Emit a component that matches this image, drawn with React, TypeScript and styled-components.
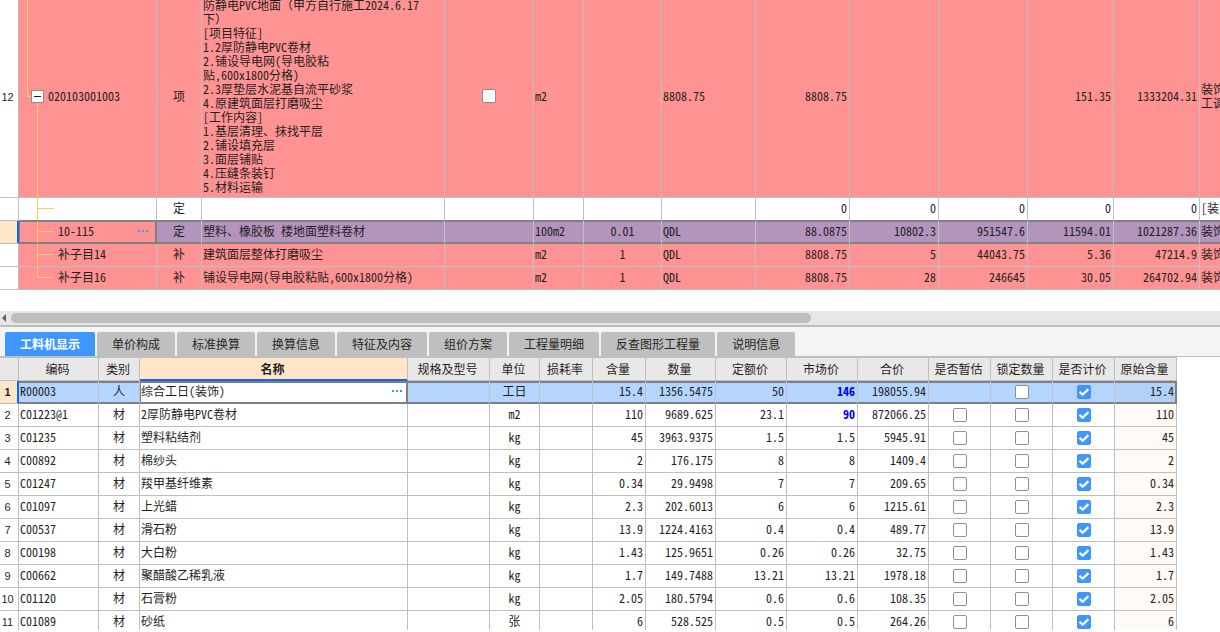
import React from 'react';
import styled, { createGlobalStyle, css } from 'styled-components';

const color = {
  line: '#bfbfbf',
  frame: '#808080',
  pink: '#ff9292',
  purple: '#b294bd',
  select: '#b4d5ff',
  peach: '#ffe6c8',
  head: '#e8e8e8',
  accent: '#0a66ff',
  blue: '#4096ff',
  tree: '#ffc773',
  text: '#1f1f1f',
};

const GlobalStyle = createGlobalStyle`
  * { box-sizing: border-box; }
  body {
    margin: 0;
    background: #fff;
    color: ${color.text};
    font-family: "Noto Sans CJK SC", "Liberation Sans", sans-serif;
    font-size: 12px;
    line-height: 14px;
    font-feature-settings: "hwid";
  }
  button, input { font: inherit; margin: 0; }
`;

const Page = styled.main`
  display: flex;
  flex-direction: column;
  height: 100vh;
  overflow: hidden;
`;

const BudgetPane = styled.section`
  flex: none;
  overflow: hidden;
  padding-bottom: 21px;
`;

const Table = styled.table`
  table-layout: fixed;
  border-collapse: separate;
  border-spacing: 0;
`;

const BudgetTable = styled(Table)`
  width: 100%;
  min-width: 1260px;
  margin-top: -4px;
`;

const ResourceTable = styled(Table)`
  width: 1177px;
  border-top: 1px solid ${color.line};
`;

const Row = styled.tr<{ $tall?: boolean }>`
  height: ${p => (p.$tall ? 202 : 23)}px;
`;

type Align = 'left' | 'center' | 'right';

const Cell = styled.td<{
  $align?: Align;
  $bg?: string;
  $selected?: boolean;
  $beforeSelected?: boolean;
  $inset?: number;
  $framed?: boolean;
  $edge?: boolean;
  $flush?: boolean;
  $strong?: boolean;
}>`
  padding: ${p => (p.$flush ? 0 : '0 2px 2px')};
  text-align: ${p => p.$align ?? 'left'};
  vertical-align: middle;
  white-space: pre;
  overflow: hidden;
  background: ${p => p.$bg ?? '#fff'};
  border-right: 1px solid ${color.line};
  border-bottom: 1px solid ${color.line};
  ${p => (p.$align ?? 'left') === 'left' && !p.$flush && css`padding-left: 1px;`}
  ${p => p.$strong && css`color: #0000f0; font-weight: 700;`}
  ${p => p.$beforeSelected && css`border-bottom-color: ${color.frame};`}
  ${p =>
    p.$selected &&
    css`
      border-bottom-color: ${color.frame};
      box-shadow: inset 0 ${p.$inset ?? 1}px ${color.frame}, inset 0 -1px ${color.frame}
        ${p.$framed ? `, inset 1px 0 ${color.frame}, inset -1px 0 ${color.frame}` : ''}
        ${p.$edge ? `, inset -1px 0 ${color.frame}` : ''};
      ${(p.$framed || p.$edge) && css`border-right-color: ${color.frame};`}
    `}
`;

const FullWidth = styled.span`
  font-feature-settings: normal;
`;

const RowHead = styled.th<{ $current?: boolean }>`
  padding: 0 3px 0 0;
  overflow: hidden;
  white-space: nowrap;
  font-family: "Liberation Sans", sans-serif;
  font-size: 11px;
  font-weight: ${p => (p.$current ? 700 : 400)};
  text-align: center;
  vertical-align: middle;
  background: ${p => (p.$current ? color.peach : '#fff')};
  border-right: 1px solid ${p => (p.$current ? color.accent : color.line)};
  border-bottom: 1px solid ${color.line};
  ${p => p.$current && css`box-shadow: inset -1px 0 ${color.accent};`}
`;

const ColHead = styled.th<{ $current?: boolean }>`
  padding: 0 2px 0 0;
  font-weight: ${p => (p.$current ? 700 : 400)};
  text-align: center;
  white-space: nowrap;
  background: ${p => (p.$current ? color.peach : color.head)};
  border-right: 1px solid ${color.line};
  border-bottom: 1px solid ${p => (p.$current ? color.accent : color.line)};
  ${p => p.$current && css`box-shadow: inset 0 -1px ${color.accent};`}
`;

const Split = styled.div`
  display: flex;
  align-items: center;
  flex: 1;
  justify-content: space-between;
`;

const TreeCell = styled.div`
  display: flex;
  align-items: center;

  > ${Split} { padding-bottom: 2px; }
`;

const TreeStack = styled.div`
  display: grid;
  align-items: center;
  flex: none;
  margin-right: 4px;

  > * { grid-area: 1 / 1; }
`;

const TreeLines = styled.svg`
  display: block;
  stroke: ${color.tree};
  fill: none;
  shape-rendering: crispEdges;
`;

const ToggleButton = styled.button`
  display: grid;
  place-items: center;
  justify-self: end;
  width: 13px;
  height: 13px;
  padding: 0;
  border: 1px solid #8c8c8c;
  background: #fff;

  &::before {
    content: '';
    width: 7px;
    height: 1px;
    background: ${color.text};
  }
`;

const MoreButton = styled.button<{ $wide?: boolean }>`
  display: flex;
  gap: 2px;
  padding: 4px ${p => (p.$wide ? 8 : 3)}px 4px 0;
  border: 0;
  background: none;
`;

const Dot = styled.i`
  width: 2px;
  height: 2px;
  background: #4398dc;
`;

const CheckWrap = styled.span`
  display: inline-grid;
  vertical-align: middle;

  > * { grid-area: 1 / 1; }
`;

const CheckInput = styled.input`
  appearance: none;
  width: 14px;
  height: 14px;
  border: 1px solid #8f8f8f;
  border-radius: 2px;
  background: #fff;

  &:checked {
    border-color: ${color.blue};
    background: ${color.blue};
  }
`;

const Tick = styled.svg`
  pointer-events: none;
`;

const ScrollTrack = styled.div`
  flex: none;
  display: grid;
  grid-template-columns: 11px 800fr 409fr;
  align-items: center;
  height: 14px;
  background: #e7e7e7;
`;

const ScrollArrow = styled.button`
  display: flex;
  padding: 0 0 0 2px;
  border: 0;
  background: none;
`;

const ScrollThumb = styled.div`
  height: 10px;
  border-radius: 5px;
  background: #bebebe;
`;

const TabBar = styled.nav`
  flex: none;
  display: flex;
  gap: 2px;
  padding: 5px 5px 0;
  height: 32px;
  background: #f4f4f4;
  border-top: 2px solid ${color.line};
  border-bottom: 1px solid ${color.line};
`;

const Tab = styled.button<{ $active?: boolean }>`
  flex: none;
  height: 24px;
  padding: 0 15px;
  border: 0;
  border-radius: 2px 2px 0 0;
  white-space: nowrap;
  color: ${p => (p.$active ? '#fff' : '#262626')};
  font-weight: ${p => (p.$active ? 700 : 400)};
  background: ${p => (p.$active ? color.blue : color.line)};
`;

const ResourcePane = styled.section`
  flex: 1;
  min-height: 0;
  overflow: hidden;
  border-bottom: 2px solid #fff;
`;

function More({ wide }: { wide?: boolean }) {
  return (
    <MoreButton $wide={wide} type="button" aria-label="更多">
      <Dot /><Dot /><Dot />
    </MoreButton>
  );
}

function Check({ label, checked = false }: { label: string; checked?: boolean }) {
  return (
    <CheckWrap>
      <CheckInput type="checkbox" aria-label={label} defaultChecked={checked} />
      {checked && (
        <Tick width="14" height="14" viewBox="0 0 14 14" fill="none" stroke="#fff" strokeWidth="2.2">
          <path d="M2.6 6.8 L5.6 9.8 L11.4 4.1" />
        </Tick>
      )}
    </CheckWrap>
  );
}

function Branch({ last }: { last?: boolean }) {
  return (
    <TreeLines width="35" height="22" viewBox="0 0 35 22">
      <path d={last ? 'M18.5 0 V10.5 H35' : 'M18.5 0 V22 M18.5 10.5 H35'} />
    </TreeLines>
  );
}

/* Full-width brackets keep a whole em while the Latin text is half-width. */
function WideText({ text }: { text: string }) {
  return (
    <>
      {text.split(/([（）])/).map((part, i) =>
        i % 2 ? <FullWidth key={i}>{part}</FullWidth> : part
      )}
    </>
  );
}

const rootName = [
  '防静电PVC地面（甲方自行施工2024.6.17',
  '下）',
  '[项目特征]',
  '1.2厚防静电PVC卷材',
  '2.铺设导电网(导电胶粘',
  '贴,600x1800分格)',
  '2.3厚垫层水泥基自流平砂浆',
  '4.原建筑面层打磨吸尘',
  '[工作内容]',
  '1.基层清理、抹找平层',
  '2.铺设填充层',
  '3.面层铺贴',
  '4.压缝条装钉',
  '5.材料运输',
].join('\n');

const budgetWidths = [19, 138, 45, 243, 89, 50, 78, 94, 94, 89, 89, 86, 86];

interface BudgetRow {
  no?: string;
  code: string;
  kind: string;
  name: string;
  unit: string;
  factor: string;
  expr: string;
  nums: string[];
  group: string;
  bg: string;
  root?: boolean;
  selected?: boolean;
}

const budgetRows: BudgetRow[] = [
  { no: '12', code: '020103001003', kind: '项', name: rootName, unit: 'm2', factor: '', expr: '8808.75', nums: ['8808.75', '', '', '151.35', '1333204.31'], group: '装饰\n工调', bg: color.pink, root: true },
  { code: '', kind: '定', name: '', unit: '', factor: '', expr: '', nums: ['0', '0', '0', '0', '0'], group: '[装', bg: '#fff' },
  { code: '10-115', kind: '定', name: '塑料、橡胶板 楼地面塑料卷材', unit: '100m2', factor: '0.01', expr: 'QDL', nums: ['88.0875', '10802.3', '951547.6', '11594.01', '1021287.36'], group: '装饰', bg: color.purple, selected: true },
  { code: '补子目14', kind: '补', name: '建筑面层整体打磨吸尘', unit: 'm2', factor: '1', expr: 'QDL', nums: ['8808.75', '5', '44043.75', '5.36', '47214.9'], group: '装饰', bg: color.pink },
  { code: '补子目16', kind: '补', name: '铺设导电网(导电胶粘贴,600x1800分格)', unit: 'm2', factor: '1', expr: 'QDL', nums: ['8808.75', '28', '246645', '30.05', '264702.94'], group: '装饰', bg: color.pink },
];

function BudgetLine({ row, index }: { row: BudgetRow; index: number }) {
  const common = {
    $bg: row.bg,
    $selected: row.selected,
    $beforeSelected: budgetRows[index + 1]?.selected,
  };
  return (
    <Row $tall={row.root}>
      <RowHead scope="row" $current={row.selected}>{row.no}</RowHead>
      <Cell {...common} $bg={row.selected ? color.pink : row.bg} $framed={row.selected} $flush>
        <TreeCell>
          {row.root ? (
            <TreeStack>
              <TreeLines width="25" height="201" viewBox="0 0 25 201">
                <path d="M8.5 0 V100.5 H12 M18.5 106 V201" />
              </TreeLines>
              <ToggleButton type="button" aria-label="折叠" />
            </TreeStack>
          ) : (
            <TreeStack>
              <Branch last={index === budgetRows.length - 1} />
            </TreeStack>
          )}
          <Split>
            {row.code}
            {row.selected && <More wide />}
          </Split>
        </TreeCell>
      </Cell>
      <Cell {...common} $align="center">{row.kind}</Cell>
      <Cell {...common}><WideText text={row.name} /></Cell>
      <Cell {...common} $align="center">{row.root && <Check label="锁定综合单价" />}</Cell>
      <Cell {...common}>{row.unit}</Cell>
      <Cell {...common} $align="center">{row.factor}</Cell>
      <Cell {...common}>{row.expr}</Cell>
      {row.nums.map((n, i) => (
        <Cell key={i} {...common} $align="right">{n}</Cell>
      ))}
      <Cell {...common}>{row.group}</Cell>
    </Row>
  );
}

const tabs = ['工料机显示', '单价构成', '标准换算', '换算信息', '特征及内容', '组价方案', '工程量明细', '反查图形工程量', '说明信息'];

const resourceWidths = [19, 80, 41, 268, 82, 50, 53, 53, 70, 71, 71, 71, 62, 62, 62, 62];
const resourceHeads = ['编码', '类别', '名称', '规格及型号', '单位', '损耗率', '含量', '数量', '定额价', '市场价', '合价', '是否暂估', '锁定数量', '是否计价', '原始含量'];

/* code, kind, name, unit, content, quantity, quota price, market price, total */
const resources: string[][] = [
  ['R00003', '人', '综合工日(装饰)', '工日', '15.4', '1356.5475', '50', '146', '198055.94'],
  ['C01223@1', '材', '2厚防静电PVC卷材', 'm2', '110', '9689.625', '23.1', '90', '872066.25'],
  ['C01235', '材', '塑料粘结剂', 'kg', '45', '3963.9375', '1.5', '1.5', '5945.91'],
  ['C00892', '材', '棉纱头', 'kg', '2', '176.175', '8', '8', '1409.4'],
  ['C01247', '材', '羧甲基纤维素', 'kg', '0.34', '29.9498', '7', '7', '209.65'],
  ['C01097', '材', '上光蜡', 'kg', '2.3', '202.6013', '6', '6', '1215.61'],
  ['C00537', '材', '滑石粉', 'kg', '13.9', '1224.4163', '0.4', '0.4', '489.77'],
  ['C00198', '材', '大白粉', 'kg', '1.43', '125.9651', '0.26', '0.26', '32.75'],
  ['C00662', '材', '聚醋酸乙稀乳液', 'kg', '1.7', '149.7488', '13.21', '13.21', '1978.18'],
  ['C01120', '材', '石膏粉', 'kg', '2.05', '180.5794', '0.6', '0.6', '108.35'],
  ['C01089', '材', '砂纸', '张', '6', '528.525', '0.5', '0.5', '264.26'],
];

function ResourceLine({ data, index }: { data: string[]; index: number }) {
  const [code, kind, name, unit, content, quantity, quota, market, total] = data;
  const selected = index === 0;
  const common = { $selected: selected, $inset: 2, $bg: selected ? color.select : '#fff' };
  return (
    <Row>
      <RowHead scope="row" $current={selected}>{index + 1}</RowHead>
      <Cell {...common}>{code}</Cell>
      <Cell {...common} $align="center">{kind}</Cell>
      <Cell {...common} $bg="#fff" $framed={selected}>
        {selected ? <Split>{name}<More /></Split> : name}
      </Cell>
      <Cell {...common} />
      <Cell {...common} $align="center">{unit}</Cell>
      <Cell {...common} />
      <Cell {...common} $align="right">{content}</Cell>
      <Cell {...common} $align="right">{quantity}</Cell>
      <Cell {...common} $align="right">{quota}</Cell>
      <Cell {...common} $align="right" $strong={index < 2}>{market}</Cell>
      <Cell {...common} $align="right">{total}</Cell>
      <Cell {...common} $align="center">{!selected && <Check label="是否暂估" />}</Cell>
      <Cell {...common} $align="center"><Check label="锁定数量" /></Cell>
      <Cell {...common} $align="center"><Check label="是否计价" checked /></Cell>
      <Cell {...common} $align="right" $edge={selected} $bg={selected ? '#b2d1f8' : '#fffaf5'}>{content}</Cell>
    </Row>
  );
}

export default function App() {
  return (
    <Page>
      <GlobalStyle />
      <BudgetPane>
        <BudgetTable>
          <colgroup>
            {budgetWidths.map((w, i) => <col key={i} width={w} />)}
            <col />
          </colgroup>
          <tbody>
            {budgetRows.map((row, i) => <BudgetLine key={i} row={row} index={i} />)}
          </tbody>
        </BudgetTable>
      </BudgetPane>
      <ScrollTrack>
        <ScrollArrow type="button" aria-label="向左滚动">
          <svg width="4" height="8" viewBox="0 0 4 8" fill="#5f5f68"><path d="M4 0 V8 L0 4 Z" /></svg>
        </ScrollArrow>
        <ScrollThumb />
      </ScrollTrack>
      <TabBar>
        {tabs.map((t, i) => <Tab key={t} type="button" $active={i === 0}>{t}</Tab>)}
      </TabBar>
      <ResourcePane>
        <ResourceTable>
          <colgroup>
            {resourceWidths.map((w, i) => <col key={i} width={w} />)}
          </colgroup>
          <thead>
            <Row>
              <ColHead />
              {resourceHeads.map(h => <ColHead key={h} scope="col" $current={h === '名称'}>{h}</ColHead>)}
            </Row>
          </thead>
          <tbody>
            {resources.map((data, i) => <ResourceLine key={data[0]} data={data} index={i} />)}
          </tbody>
        </ResourceTable>
      </ResourcePane>
    </Page>
  );
}
